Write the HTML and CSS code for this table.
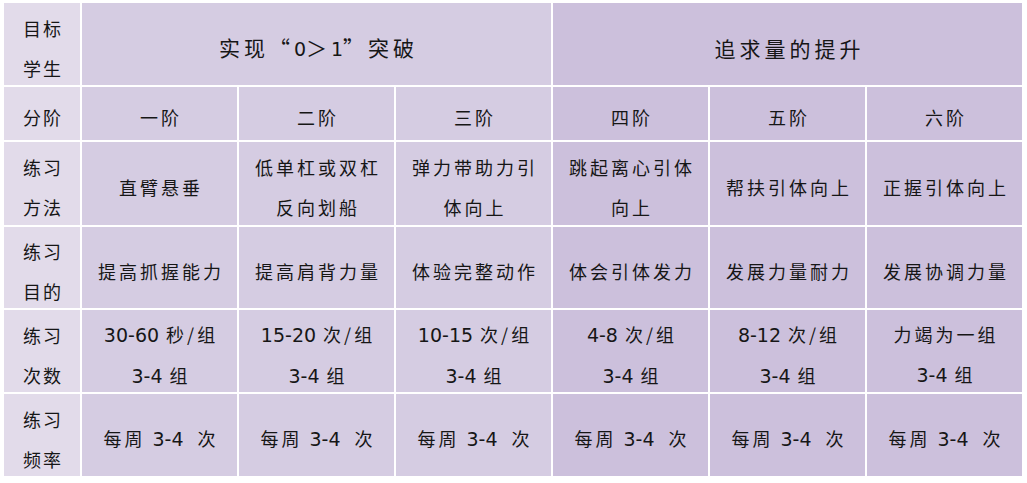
FILE: index.html
```html
<!DOCTYPE html>
<html lang="zh-CN">
<head>
<meta charset="utf-8">
<title>引体向上分阶训练</title>
<link rel="stylesheet" href="styles.css">
</head>
<body>
<div class="table">
  <div class="cell head"><p class="t">目标<br>学生</p></div>
  <div class="cell mid title span3"><p class="t">实现“<span class="num">0</span>＞<span class="num">1</span>”突破</p></div>
  <div class="cell right title span3"><p class="t">追求量的提升</p></div>

  <div class="cell head"><p class="t">分阶</p></div>
  <div class="cell mid"><p class="t">一阶</p></div>
  <div class="cell mid"><p class="t">二阶</p></div>
  <div class="cell mid"><p class="t">三阶</p></div>
  <div class="cell right"><p class="t">四阶</p></div>
  <div class="cell right"><p class="t">五阶</p></div>
  <div class="cell right"><p class="t">六阶</p></div>

  <div class="cell head"><p class="t">练习<br>方法</p></div>
  <div class="cell mid"><p class="t">直臂悬垂</p></div>
  <div class="cell mid"><p class="t">低单杠或双杠<br>反向划船</p></div>
  <div class="cell mid"><p class="t">弹力带助力引<br>体向上</p></div>
  <div class="cell right"><p class="t">跳起离心引体<br>向上</p></div>
  <div class="cell right"><p class="t">帮扶引体向上</p></div>
  <div class="cell right"><p class="t">正握引体向上</p></div>

  <div class="cell head"><p class="t">练习<br>目的</p></div>
  <div class="cell mid"><p class="t">提高抓握能力</p></div>
  <div class="cell mid"><p class="t">提高肩背力量</p></div>
  <div class="cell mid"><p class="t">体验完整动作</p></div>
  <div class="cell right"><p class="t">体会引体发力</p></div>
  <div class="cell right"><p class="t">发展力量耐力</p></div>
  <div class="cell right"><p class="t">发展协调力量</p></div>

  <div class="cell head"><p class="t">练习<br>次数</p></div>
  <div class="cell mid"><p class="t"><span class="num">30-60</span> 秒/组<br><span class="num">3-4</span> 组</p></div>
  <div class="cell mid"><p class="t"><span class="num">15-20</span> 次/组<br><span class="num">3-4</span> 组</p></div>
  <div class="cell mid"><p class="t"><span class="num">10-15</span> 次/组<br><span class="num">3-4</span> 组</p></div>
  <div class="cell right"><p class="t"><span class="num">4-8</span> 次/组<br><span class="num">3-4</span> 组</p></div>
  <div class="cell right"><p class="t"><span class="num">8-12</span> 次/组<br><span class="num">3-4</span> 组</p></div>
  <div class="cell right"><p class="t">力竭为一组<br><span class="num">3-4</span> 组</p></div>

  <div class="cell head"><p class="t">练习<br>频率</p></div>
  <div class="cell mid"><p class="t">每周 <span class="num">3-4</span>&nbsp; 次</p></div>
  <div class="cell mid"><p class="t">每周 <span class="num">3-4</span>&nbsp; 次</p></div>
  <div class="cell mid"><p class="t">每周 <span class="num">3-4</span>&nbsp; 次</p></div>
  <div class="cell right"><p class="t">每周 <span class="num">3-4</span>&nbsp; 次</p></div>
  <div class="cell right"><p class="t">每周 <span class="num">3-4</span>&nbsp; 次</p></div>
  <div class="cell right"><p class="t">每周 <span class="num">3-4</span>&nbsp; 次</p></div>
</div>
</body>
</html>
```

FILE: styles.css
```css
html, body {
  margin: 0;
  padding: 0;
  background: #ffffff;
}

body {
  font-family: "Noto Sans CJK SC", "Noto Sans", sans-serif;
  color: #161616;
}

.table {
  display: grid;
  grid-template-columns: 76px repeat(6, 155px);
  grid-template-rows: 82px 53px 83px 81px 82px 82px;
  gap: 2px;
  margin: 3px 0 0 4px;
  width: 1018px;
}

.cell {
  display: flex;
  align-items: center;
  justify-content: center;
  text-align: center;
  font-size: 18px;
  line-height: 40px;
  letter-spacing: 3px;
  padding: 7px 0 0 3px;
}

.t {
  margin: 0;
  white-space: nowrap;
}

.head {
  background: #e2dbea;
  letter-spacing: 2px;
  padding-left: 2px;
}

.mid {
  background: #d5cce2;
}

.right {
  background: #ccc0dc;
}

.title {
  font-size: 21px;
  letter-spacing: 4px;
  padding-left: 4px;
}

.span3 {
  grid-column: span 3;
}

.num {
  font-family: "DejaVu Sans", Verdana, sans-serif;
  font-size: 19px;
  letter-spacing: 0;
}
```
